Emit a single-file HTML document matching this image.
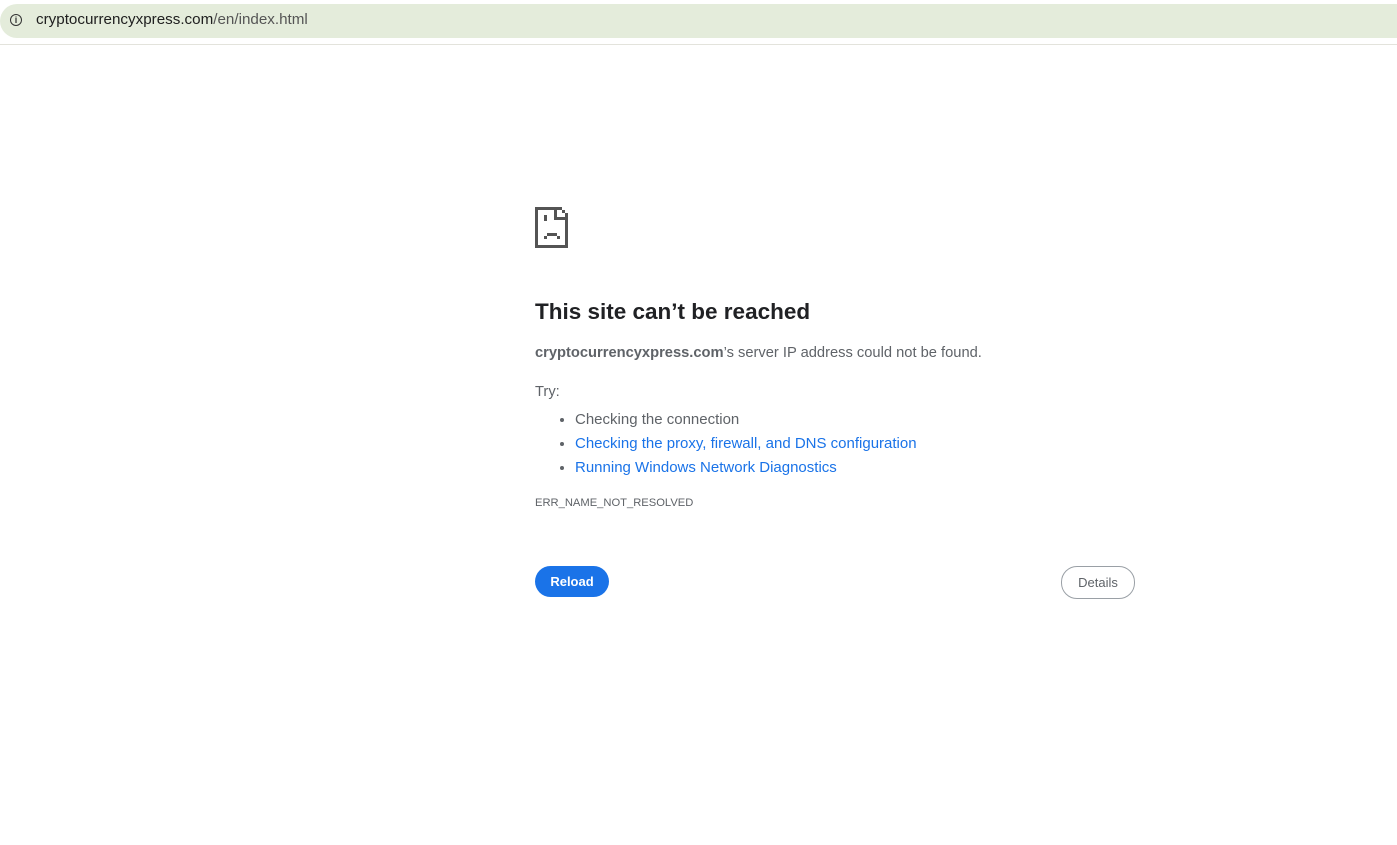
<!DOCTYPE html>
<html><head><meta charset="utf-8"><style>
html,body{margin:0;padding:0;background:#fff;width:1397px;height:845px;overflow:hidden;font-family:"Liberation Sans",sans-serif;}
.bar{position:absolute;left:0;top:0;width:1397px;height:44px;border-bottom:1px solid #e3e3dc;background:#fff;}
.url{position:absolute;left:0;top:4px;width:1397px;height:34px;background:#e4ecdb;border-radius:17px 0 0 17px;}
.info{position:absolute;left:10px;top:14px;width:10px;height:10px;border:1.5px solid #333;border-radius:50%;font-size:9px;line-height:10px;text-align:center;font-weight:bold;color:#333}
.urltext{position:absolute;left:36px;top:11px;font-size:15.2px;color:#202020;}
.urltext span{color:#555}
.main{position:absolute;left:535px;top:0;width:600px;color:#5f6368;}
h1{position:absolute;top:299px;left:0;margin:0;font-size:22.5px;font-weight:bold;color:#202124;white-space:nowrap}
.p1{position:absolute;top:345px;left:0;font-size:14.7px;white-space:nowrap}
.p1 b{color:#5f6368}
.try{position:absolute;top:384px;left:0;font-size:14.7px}
ul{position:absolute;top:408px;left:0;margin:0;padding-left:40px;font-size:15px;line-height:24px;white-space:nowrap}
li.a{color:#1a73e8}
li::marker{color:#5f6368}
.err{position:absolute;top:497px;left:0;font-size:11.2px;color:#5f6368}
.reload{position:absolute;left:535px;top:566px;width:74px;height:31px;border-radius:16px;background:#1a73e8;color:#fff;font-size:13px;font-weight:bold;text-align:center;line-height:31px}
.details{position:absolute;left:1061px;top:566px;width:72px;height:31px;border-radius:16px;border:1px solid #9aa0a6;color:#5f6368;font-size:13px;text-align:center;line-height:31px}
</style></head><body>
<div class="bar"><div class="url"></div><div class="info">i</div><div class="urltext">cryptocurrencyxpress.com<span>/en/index.html</span></div></div>
<svg style="position:absolute;left:535px;top:207px" width="34" height="42" viewBox="0 0 34 42" fill="#545454">
<rect x="0" y="0" width="3" height="41"/>
<rect x="0" y="38" width="33" height="3"/>
<rect x="30" y="6" width="3" height="35"/>
<rect x="0" y="0" width="27" height="3"/>
<rect x="27" y="3" width="3" height="3"/>
<rect x="19" y="0" width="3" height="13"/>
<rect x="19" y="10" width="14" height="3"/>
<rect x="9" y="8" width="3" height="6"/>
<rect x="12" y="26" width="10" height="3"/>
<rect x="9" y="29" width="3" height="3"/>
<rect x="22" y="29" width="3" height="3"/>
</svg>
<div class="main">
<h1>This site can’t be reached</h1>
<div class="p1"><b>cryptocurrencyxpress.com</b>’s server IP address could not be found.</div>
<div class="try">Try:</div>
<ul><li>Checking the connection</li><li class="a">Checking the proxy, firewall, and DNS configuration</li><li class="a">Running Windows Network Diagnostics</li></ul>
<div class="err">ERR_NAME_NOT_RESOLVED</div>
</div>
<div class="reload">Reload</div>
<div class="details">Details</div>
</body></html>
